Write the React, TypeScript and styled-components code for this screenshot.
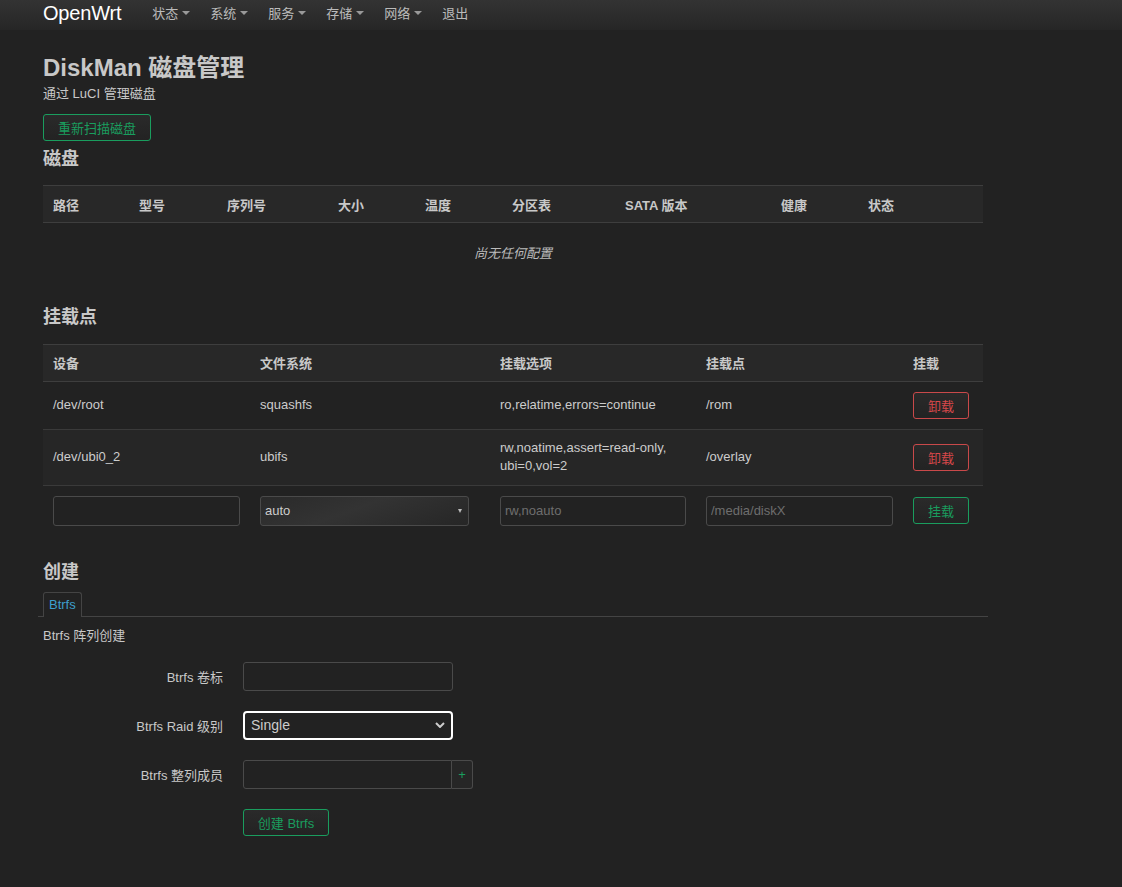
import { FC } from 'react';
import styled, { createGlobalStyle, css } from 'styled-components';

const GlobalStyle = createGlobalStyle`
  html, body {
    margin: 0;
    padding: 0;
    background: #222222;
  }
  body {
    font-family: "Liberation Sans", Arial, "Noto Sans CJK SC", sans-serif;
    font-size: 13px;
    color: #cccccc;
  }
  * { box-sizing: border-box; }
`;

const Header = styled.header`
  height: 30px;
  background: linear-gradient(#333333, #262626);
  display: flex;
  align-items: center;
  padding-left: 43px;
`;
const Brand = styled.a`
  font-size: 20px;
  color: #ffffff;
  margin-right: 21px;
  letter-spacing: -0.2px;
  line-height: 24px;
  margin-top: -5px;
`;
const Nav = styled.nav`
  display: flex;
  align-items: center;
  margin-top: -5px;
`;
const NavItem = styled.span`
  color: #bbbbbb;
  font-size: 13px;
  padding: 0 10px;
  display: inline-flex;
  align-items: center;
`;
const Caret = styled.span`
  display: inline-block;
  width: 0;
  height: 0;
  margin-left: 4px;
  border-left: 4px solid transparent;
  border-right: 4px solid transparent;
  border-top: 4px solid #999999;
`;

const Main = styled.main`
  padding: 23px 0 50px 43px;
  width: 983px;
`;
const Title = styled.h2`
  margin: 0;
  font-size: 24px;
  font-weight: bold;
  color: #c8c8c8;
  line-height: 30px;
`;
const Subtitle = styled.div`
  margin-top: 3px;
  line-height: 16px;
  color: #c8c8c8;
`;
const SectionTitle = styled.h3<{ $top?: number }>`
  margin: ${(p) => p.$top ?? 0}px 0 0;
  font-size: 18px;
  font-weight: bold;
  color: #c8c8c8;
  line-height: 20px;
`;

const Btn = styled.button<{ $variant: 'green' | 'red' }>`
  font-family: inherit;
  font-size: 13px;
  background: linear-gradient(#2a2a2a, #232323);
  border-radius: 3px;
  padding: 0 12px;
  height: 27px;
  cursor: pointer;
  ${(p) =>
    p.$variant === 'green'
      ? css`
          border: 1px solid #1a9d5e;
          color: #1a9d5e;
        `
      : css`
          border: 1px solid #c9494a;
          color: #d8484a;
        `}
`;
const RescanBtn = styled(Btn)`
  margin-top: 12px;
  width: 108px;
`;
const SmallBtn = styled(Btn)`
  width: 56px;
  padding: 0;
`;

const Table = styled.table<{ $top: number }>`
  width: 940px;
  margin-top: ${(p) => p.$top}px;
  border-collapse: collapse;
  table-layout: fixed;
`;
const Th = styled.th<{ $w?: number }>`
  text-align: left;
  font-weight: bold;
  height: 37px;
  padding: 0 10px;
  background: #282828;
  border-top: 1px solid #3e3e3e;
  border-bottom: 1px solid #3e3e3e;
  color: #c8c8c8;
  ${(p) => p.$w && `width: ${p.$w}px;`}
`;
const Tr = styled.tr<{ $striped?: boolean }>`
  background: ${(p) => (p.$striped ? '#262626' : '#222222')};
`;
const Td = styled.td<{ $h?: number; $wrap?: boolean }>`
  padding: 0 10px;
  height: ${(p) => p.$h ?? 48}px;
  border-bottom: 1px solid #3a3a3a;
  line-height: 18px;
  color: #cccccc;
  white-space: ${(p) => (p.$wrap ? 'pre-line' : 'normal')};
`;
const InputTd = styled.td`
  padding: 10px 10px 12px;
  height: 52px;
`;
const EmptyCell = styled.td`
  text-align: center;
  font-style: italic;
  height: 60px;
  padding-top: 0;
  color: #bbbbbb;
`;

const TextInput = styled.input`
  width: 100%;
  height: 30px;
  background: #222222;
  border: 1px solid #4a4a4a;
  border-radius: 3px;
  color: #cccccc;
  font-family: inherit;
  font-size: 13px;
  padding: 0 4px;
  &::placeholder {
    color: #6e6e6e;
  }
`;
const FakeSelect = styled.div`
  width: 209px;
  height: 30px;
  border: 1px solid #4a4a4a;
  border-radius: 3px;
  background: linear-gradient(160deg, #2a2a2a 0%, #333333 45%, #262626 100%);
  display: flex;
  align-items: center;
  justify-content: space-between;
  padding: 0 6px 0 4px;
  color: #cccccc;
`;
const MiniArrow = styled.span`
  width: 0;
  height: 0;
  border-left: 2.5px solid transparent;
  border-right: 2.5px solid transparent;
  border-top: 4px solid #bbbbbb;
`;

const Tabs = styled.div`
  margin: 10px 0 0 -5px;
  width: 950px;
  border-bottom: 1px solid #444444;
  padding-left: 5px;
  display: flex;
`;
const Tab = styled.div`
  border: 1px solid #444444;
  border-bottom: none;
  border-radius: 3px 3px 0 0;
  padding: 0 5px;
  height: 25px;
  line-height: 24px;
  color: #3d9fcc;
  background: #222222;
  margin-bottom: -1px;
`;
const TabCaption = styled.div`
  margin-top: 8px;
  color: #c8c8c8;
`;

const Form = styled.div`
  margin-top: 18px;
  display: grid;
  grid-template-columns: 180px 210px auto;
  column-gap: 20px;
  row-gap: 20px;
  align-items: center;
  justify-content: start;
`;
const Label = styled.label`
  text-align: right;
  color: #c8c8c8;
  grid-column: 1;
`;
const Field = styled.div`
  grid-column: 2;
`;
const FormInput = styled(TextInput)`
  height: 29px;
`;
const NativeSelect = styled.select`
  width: 100%;
  height: 29px;
  background: #222222;
  border: 2px solid #ffffff;
  border-radius: 4px;
  color: #cccccc;
  font-family: inherit;
  font-size: 14px;
  padding: 0 6px;
  appearance: none;
  background-image: url("data:image/svg+xml;utf8,<svg xmlns='http://www.w3.org/2000/svg' width='10' height='6'><path d='M1 1l4 4 4-4' stroke='%23cccccc' stroke-width='2' fill='none'/></svg>");
  background-repeat: no-repeat;
  background-position: right 6px center;
`;
const InputGroup = styled.div`
  display: flex;
  width: 230px;
`;
const GroupInput = styled(FormInput)`
  border-radius: 3px 0 0 3px;
  flex: 1;
`;
const AddOn = styled.span`
  width: 21px;
  height: 29px;
  border: 1px solid #4a4a4a;
  border-left: none;
  border-radius: 0 3px 3px 0;
  background: #262626;
  color: #1a9d5e;
  display: flex;
  align-items: center;
  justify-content: center;
  font-size: 13px;
`;
const CreateBtn = styled(Btn)`
  width: 86px;
  padding: 0;
`;

const diskCols: [string, number][] = [
  ['路径', 86],
  ['型号', 88],
  ['序列号', 111],
  ['大小', 87],
  ['温度', 87],
  ['分区表', 113],
  ['SATA 版本', 156],
  ['健康', 87],
  ['状态', 125],
];

const mountCols: [string, number][] = [
  ['设备', 207],
  ['文件系统', 240],
  ['挂载选项', 206],
  ['挂载点', 207],
  ['挂载', 80],
];

const mounts = [
  { dev: '/dev/root', fs: 'squashfs', opts: 'ro,relatime,errors=continue', point: '/rom' },
  { dev: '/dev/ubi0_2', fs: 'ubifs', opts: 'rw,noatime,assert=read-only,\nubi=0,vol=2', point: '/overlay' },
];

const App: FC = () => {
  return (
    <>
      <GlobalStyle />
      <Header>
        <Brand>OpenWrt</Brand>
        <Nav>
          {['状态', '系统', '服务', '存储', '网络'].map((n) => (
            <NavItem key={n}>
              {n}
              <Caret />
            </NavItem>
          ))}
          <NavItem>退出</NavItem>
        </Nav>
      </Header>
      <Main>
        <Title>DiskMan 磁盘管理</Title>
        <Subtitle>通过 LuCI 管理磁盘</Subtitle>
        <RescanBtn $variant="green">重新扫描磁盘</RescanBtn>
        <SectionTitle $top={8}>磁盘</SectionTitle>
        <Table $top={16}>
          <thead>
            <tr>
              {diskCols.map(([n, w]) => (
                <Th key={n} $w={w}>
                  {n}
                </Th>
              ))}
            </tr>
          </thead>
          <tbody>
            <tr>
              <EmptyCell colSpan={9}>尚无任何配置</EmptyCell>
            </tr>
          </tbody>
        </Table>

        <SectionTitle $top={24}>挂载点</SectionTitle>
        <Table $top={17}>
          <thead>
            <tr>
              {mountCols.map(([n, w]) => (
                <Th key={n} $w={w}>
                  {n}
                </Th>
              ))}
            </tr>
          </thead>
          <tbody>
            {mounts.map((m, i) => (
              <Tr key={m.dev} $striped={i === 1}>
                <Td $h={i === 1 ? 56 : 48}>{m.dev}</Td>
                <Td>{m.fs}</Td>
                <Td $wrap>{m.opts}</Td>
                <Td>{m.point}</Td>
                <Td>
                  <SmallBtn $variant="red">卸载</SmallBtn>
                </Td>
              </Tr>
            ))}
            <tr>
              <InputTd>
                <TextInput />
              </InputTd>
              <InputTd>
                <FakeSelect>
                  auto
                  <MiniArrow />
                </FakeSelect>
              </InputTd>
              <InputTd>
                <TextInput placeholder="rw,noauto" />
              </InputTd>
              <InputTd>
                <TextInput placeholder="/media/diskX" />
              </InputTd>
              <InputTd>
                <SmallBtn $variant="green">挂载</SmallBtn>
              </InputTd>
            </tr>
          </tbody>
        </Table>

        <SectionTitle $top={24}>创建</SectionTitle>
        <Tabs>
          <Tab>Btrfs</Tab>
        </Tabs>
        <TabCaption>Btrfs 阵列创建</TabCaption>
        <Form>
          <Label>Btrfs 卷标</Label>
          <Field>
            <FormInput />
          </Field>
          <Label>Btrfs Raid 级别</Label>
          <Field>
            <NativeSelect defaultValue="single">
              <option value="single">Single</option>
              <option value="raid0">Raid 0</option>
              <option value="raid1">Raid 1</option>
              <option value="raid10">Raid 10</option>
            </NativeSelect>
          </Field>
          <Label>Btrfs 整列成员</Label>
          <Field>
            <InputGroup>
              <GroupInput />
              <AddOn>+</AddOn>
            </InputGroup>
          </Field>
          <Field>
            <CreateBtn $variant="green">创建 Btrfs</CreateBtn>
          </Field>
        </Form>
      </Main>
    </>
  );
};

export default App;
